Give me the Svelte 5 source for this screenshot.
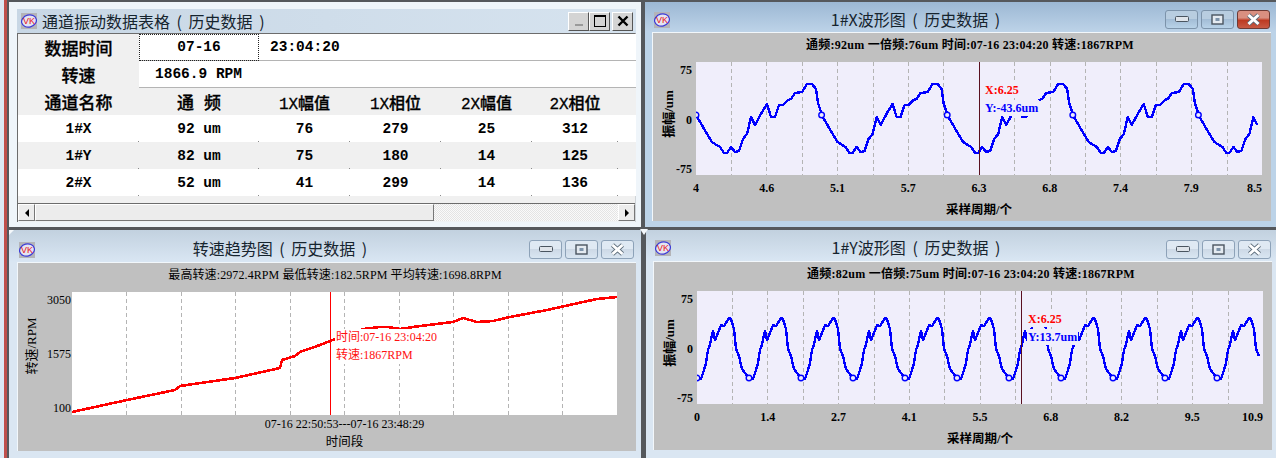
<script>
	// one period of each waveform, as [x, y] in plot pixels from the period start
	const xPeriod = [
		[0, 53], [7, 65], [16, 80], [19, 82], [24, 85], [28, 91], [31, 91], [35, 85], [39, 90], [43, 89],
		[47, 77], [51, 72], [55, 55], [59, 63], [66, 50], [71, 42], [75, 55], [79, 55], [83, 43], [87, 43],
		[92, 38], [95, 37], [99, 31], [106, 30], [111, 22], [116, 22], [120, 27], [122, 41], [126, 53]
	];
	const yPeriod = [
		[0, 87], [4, 88], [7, 79], [9, 72], [11, 59], [13, 54], [14, 48], [16, 40], [18, 49], [21, 42],
		[24, 34], [27, 35], [32, 27], [34, 28], [37, 38], [39, 58], [42, 65], [45, 78], [48, 82], [51, 86], [52, 87]
	];

	function buildWave(period, step, width) {
		const pts = [];
		const marks = [];
		for (let i = 0; i * step < width; i++) {
			marks.push([i * step, period[0][1]]);
			for (const [x, y] of period) {
				const px = x + i * step;
				if (px <= width) pts.push(px + ',' + y);
			}
		}
		return { line: pts.join(' '), marks };
	}

	const gridX = Array.from({ length: 15 }, (_, i) => (i + 1) * 35.4);
	const gridTrend = Array.from({ length: 9 }, (_, i) => (i + 1) * 54.5);

	const waves = [
		{
			cls: 'win-x',
			active: true,
			title: '1#X波形图 ( 历史数据 )',
			info: '通频:92um 一倍频:76um 时间:07-16 23:04:20 转速:1867RPM',
			ticks: ['4', '4.6', '5.1', '5.7', '6.3', '6.8', '7.4', '7.9', '8.5'],
			wave: buildWave(xPeriod, 125.6, 562),
			cursor: 283,
			tagLeft: 288,
			tagX: 'X:6.25',
			tagY: 'Y:-43.6um'
		},
		{
			cls: 'win-y',
			active: false,
			title: '1#Y波形图 ( 历史数据 )',
			info: '通频:82um 一倍频:75um 时间:07-16 23:04:20 转速:1867RPM',
			ticks: ['0', '1.4', '2.7', '4.1', '5.5', '6.8', '8.2', '9.5', '10.9'],
			wave: buildWave(yPeriod, 52, 564),
			cursor: 324,
			tagLeft: 330,
			tagX: 'X:6.25',
			tagY: 'Y:13.7um'
		}
	];

	const trendPoints =
		'0,120 55,108 103,98 108,94 163,86 208,76 210,68 223,64 228,60 248,53 258,49 291,37 308,35 316,35 328,37 341,35 365,32 381,30 391,26 405,30 421,29 438,25 475,18 511,10 525,7 545,5';

	const rows = [
		['1#X', '92 um', '76', '279', '25', '312'],
		['1#Y', '82 um', '75', '180', '14', '125'],
		['2#X', '52 um', '41', '299', '14', '136']
	];
</script>

{#snippet logo()}
	<svg class="logo" width="16" height="16" viewBox="0 0 16 16">
		<rect width="16" height="16" fill="#b4b4b8" />
		<ellipse cx="8" cy="8" rx="7.5" ry="6" fill="#e4e4f0" stroke="#3a3ad8" stroke-width="1.2" transform="rotate(-15 8 8)" />
		<text x="8" y="11" text-anchor="middle" font-size="9" fill="#e8141c" font-family="Liberation Sans, sans-serif">VK</text>
	</svg>
{/snippet}

{#snippet aeroButtons(hot)}
	<div class="aero-btns">
		<span class="aero" class:dim={!hot}>
			<svg width="14" height="7" viewBox="0 0 14 7"><rect x="0.5" y="0.5" width="13" height="5" rx="1" fill="#dfe4ea" stroke="#4a5560" /></svg>
		</span>
		<span class="aero" class:dim={!hot}>
			<svg width="13" height="11" viewBox="0 0 13 11"><rect x="1" y="1" width="11" height="9" fill="#e4eaf0" stroke="#4a5560" stroke-width="1.4" /><rect x="4.5" y="4" width="4" height="3" fill="#7d93aa" /></svg>
		</span>
		<span class="aero close" class:dim={!hot}>
			<svg width="15" height="13" viewBox="0 0 15 13">
				<path d="M2.5 2 L12.5 11 M12.5 2 L2.5 11" stroke="#5a6a78" stroke-width="4.4" />
				<path d="M2.5 2 L12.5 11 M12.5 2 L2.5 11" stroke="#fff" stroke-width="3" />
			</svg>
		</span>
	</div>
{/snippet}

<div class="desktop">
	<section class="win win-table">
		<header class="table-title">
			{@render logo()}
			<span class="table-caption">通道振动数据表格 ( 历史数据 )</span>
			<div class="classic-btns">
				<span class="classic"><i class="min-glyph"></i></span>
				<span class="classic"><i class="max-glyph"></i></span>
				<span class="classic gap">
					<svg width="12" height="12" viewBox="0 0 12 12"><path d="M1.5 1.5 L10.5 10.5 M10.5 1.5 L1.5 10.5" stroke="#000" stroke-width="2.4" /></svg>
				</span>
			</div>
		</header>
		<div class="grid-frame">
			<table>
				<colgroup>
					<col class="c-name" /><col class="c-total" /><col class="c-num" />
					<col class="c-num" /><col class="c-num" /><col class="c-last" /><col />
				</colgroup>
				<tbody>
					<tr class="line-row">
						<th>数据时间</th>
						<td class="focus">07-16</td>
						<td colspan="5" class="left time-cell">23:04:20</td>
					</tr>
					<tr class="line-row">
						<th>转速</th>
						<td colspan="6" class="left rpm-cell">1866.9 RPM</td>
					</tr>
					<tr class="head-row">
						<th>通道名称</th><th>通 频</th><th class="mixed">1X幅值</th><th class="mixed">1X相位</th><th class="mixed">2X幅值</th><th class="mixed">2X相位</th><th></th>
					</tr>
					{#each rows as row, i}
						<tr class="data-row" class:shade={i === 1}>
							{#each row as cell}
								<td>{cell}</td>
							{/each}
							<td></td>
						</tr>
					{/each}
				</tbody>
			</table>
			<div class="grid-rest"></div>
			<div class="scrollbar">
				<span class="scroll-btn"><i class="arrow-left"></i></span>
				<span class="thumb"></span>
				<span class="track"></span>
				<span class="scroll-btn"><i class="arrow-right"></i></span>
			</div>
		</div>
	</section>

	{#each waves as w}
		<section class="win chart-win {w.cls}" class:active={w.active}>
			<header class="chart-title">
				{@render logo()}
				<span class="chart-caption">{w.title}</span>
				{@render aeroButtons(w.active)}
			</header>
			<div class="client wave-client">
				<div class="info">{w.info}</div>
				<div class="y-axis">
					<span class="y-title">振幅/um</span>
					<div class="y-ticks"><span>75</span><span>0</span><span>-75</span></div>
				</div>
				<div class="plot wave-plot">
					<svg width="566" height="113" viewBox="0 0 566 113">
						{#each gridX as x}
							<line x1={x} x2={x} y1="0" y2="113" class="grid-line" />
						{/each}
						<polyline points={w.wave.line} class="wave-line" />
						{#each w.wave.marks as m}
							<circle cx={m[0]} cy={m[1]} r="2.8" class="wave-mark" />
						{/each}
						<line x1={w.cursor} x2={w.cursor} y1="0" y2="113" class="cursor-dark" />
					</svg>
					<span class="tag tag-x" style="left:{w.tagLeft}px">{w.tagX}</span>
					<span class="tag tag-y" style="left:{w.tagLeft}px">{w.tagY}</span>
				</div>
				<div class="x-ticks">
					{#each w.ticks as t}
						<span><b>{t}</b></span>
					{/each}
				</div>
				<div class="x-title">采样周期/个</div>
			</div>
		</section>
	{/each}

	<section class="win chart-win win-trend">
		<header class="chart-title">
			{@render logo()}
			<span class="chart-caption">转速趋势图 ( 历史数据 )</span>
			{@render aeroButtons(false)}
		</header>
		<div class="client trend-client">
			<div class="info">最高转速:2972.4RPM 最低转速:182.5RPM 平均转速:1698.8RPM</div>
			<div class="y-axis">
				<span class="y-title">转速/RPM</span>
				<div class="y-ticks"><span>3050</span><span>1575</span><span>100</span></div>
			</div>
			<div class="plot trend-plot">
				<svg width="545" height="123" viewBox="0 0 545 123">
					{#each gridTrend as x}
						<line x1={x} x2={x} y1="0" y2="123" class="grid-line" />
					{/each}
					<polyline points={trendPoints} class="trend-line" />
					<line x1="258" x2="258" y1="0" y2="123" class="cursor-red" />
				</svg>
				<span class="trend-tag tag-time">时间:07-16 23:04:20</span>
				<span class="trend-tag tag-rpm">转速:1867RPM</span>
			</div>
			<div class="range">07-16 22:50:53---07-16 23:48:29</div>
			<div class="x-title">时间段</div>
		</div>
	</section>

	<svg class="notch notch-a" width="8" height="6" viewBox="0 0 8 6"><path d="M0 0 H8 L4 6 Z" fill="#f4f8fb" /></svg>
	<svg class="notch notch-b" width="5" height="5" viewBox="0 0 5 5"><path d="M0 0 H5 L0 5 Z" fill="#f4f8fb" /></svg>
</div>

<style>
	:global(body) {
		margin: 0;
		background: #555;
	}
	.desktop {
		position: relative;
		width: 1276px;
		height: 458px;
		overflow: hidden;
		background: linear-gradient(to right, #dce9f5 4px, #bf504c 4px 7px, #55585c 7px);
		font-family: 'Liberation Serif', 'Noto Sans CJK SC', serif;
		color: #000;
	}
	.win {
		position: absolute;
		box-sizing: border-box;
		display: flex;
		flex-direction: column;
	}
	.logo {
		flex: none;
	}

	/* table window */
	.win-table {
		left: 9px;
		top: 2px;
		width: 632px;
		height: 225px;
		padding: 7px 5px 0 8px;
		background: #eff5fa;
	}
	.table-title {
		display: flex;
		align-items: center;
		height: 24px;
		padding-left: 4px;
		box-sizing: border-box;
		background: linear-gradient(to right, #c8d7e5, #d6e3ef);
	}
	.table-caption {
		margin-left: 5px;
		font-family: 'Noto Sans CJK SC', sans-serif;
		font-size: 16px;
		word-spacing: 3px;
		color: #16242e;
	}
	.classic-btns {
		display: flex;
		margin-left: auto;
		margin-right: 3px;
	}
	.classic {
		box-sizing: border-box;
		display: flex;
		align-items: center;
		justify-content: center;
		width: 21px;
		height: 19px;
		background: #d4d4d4;
		border: 1px solid;
		border-color: #fff #555 #555 #fff;
	}
	.classic.gap {
		margin-left: 2px;
	}
	.min-glyph {
		width: 8px;
		height: 2px;
		margin-top: 8px;
		background: #9a9a9a;
	}
	.max-glyph {
		box-sizing: border-box;
		width: 12px;
		height: 12px;
		border: 1px solid #000;
		border-top-width: 2px;
	}
	.grid-frame {
		display: flex;
		flex-direction: column;
		width: 619px;
		height: 189px;
		box-sizing: border-box;
		border: 1px solid #6c6c6c;
		border-right-color: #cfd4d8;
		border-bottom: 0;
		background: #f0f0f0;
	}
	table {
		width: 618px;
		table-layout: fixed;
		border-collapse: collapse;
		font-family: 'Liberation Mono', 'Noto Sans CJK SC', monospace;
		font-size: 14.5px;
		font-weight: 700;
	}
	.c-name {
		width: 121px;
	}
	.c-total {
		width: 120px;
	}
	.c-num {
		width: 91px;
	}
	.c-last {
		width: 86px;
	}
	th,
	td {
		height: 27px;
		padding: 0;
		text-align: center;
		background: #fff;
		position: relative;
	}
	th {
		background: #f0f0f0;
		font-size: 17px;
		font-weight: 500;
		-webkit-text-stroke: 0.3px #000;
	}
	th.mixed {
		font-size: 16px;
	}
	tr.line-row td,
	tr.line-row th {
		border-bottom: 1px solid #b4b4b4;
		height: 26px;
	}
	tr.line-row th {
		border-bottom-color: #f0f0f0;
	}
	tr.data-row td {
		padding-top: 1px;
		height: 26px;
	}
	tr.data-row td:not(:last-child)::after {
		content: '';
		position: absolute;
		right: 0;
		bottom: 0;
		width: 1px;
		height: 1px;
		background: #8a8a8a;
	}
	tr.shade td {
		background: #f0f0f0;
	}
	td.left {
		text-align: left;
	}
	td.time-cell {
		padding-left: 11px;
	}
	td.rpm-cell {
		padding-left: 16px;
	}
	td.focus {
		outline: 1px dotted #222;
		outline-offset: -1px;
	}
	.grid-rest {
		flex: 1;
	}
	.scrollbar {
		display: flex;
		height: 18px;
		border-top: 1px solid #6c6c6c;
		box-sizing: content-box;
		background: #eff2f4;
	}
	.scroll-btn {
		box-sizing: border-box;
		display: flex;
		align-items: center;
		justify-content: center;
		width: 17px;
		height: 17px;
		background: #ececec;
		border: 1px solid;
		border-color: #fff #777 #777 #fff;
	}
	.arrow-left,
	.arrow-right {
		width: 0;
		height: 0;
		border: 4px solid transparent;
	}
	.arrow-left {
		border-right-color: #000;
		border-left-width: 0;
	}
	.arrow-right {
		border-left-color: #000;
		border-right-width: 0;
	}
	.thumb {
		box-sizing: border-box;
		width: 399px;
		height: 17px;
		background: #ececec;
		border: 1px solid;
		border-color: #fff #777 #777 #fff;
	}
	.track {
		flex: 1;
		height: 17px;
		background: repeating-conic-gradient(#fafafa 0 25%, #e4e4e4 0 50%) 0 0 / 2px 2px;
	}

	/* chart windows */
	.chart-win {
		background: #dae6f2;
	}
	.chart-win.active {
		background: #bcd3e8;
	}
	.chart-title {
		position: relative;
		display: flex;
		align-items: center;
		justify-content: center;
		padding-right: 90px;
		padding-top: 3px;
		background: linear-gradient(#c2d1df, #d9e6f3);
		box-sizing: border-box;
	}
	.active .chart-title {
		background: linear-gradient(#9cb8d4, #bdd3e8);
	}
	.chart-title .logo {
		position: absolute;
		left: 4px;
		top: 12px;
	}
	.chart-caption {
		font-family: 'Noto Sans CJK SC', sans-serif;
		font-size: 16px;
		word-spacing: 3px;
		color: #16242e;
	}
	.aero-btns {
		position: absolute;
		top: 10px;
		right: 2px;
		display: flex;
		gap: 3px;
	}
	.aero {
		box-sizing: border-box;
		display: flex;
		align-items: center;
		justify-content: center;
		width: 33px;
		height: 19px;
		border: 1px solid #7c93aa;
		border-radius: 3px;
		background: linear-gradient(#b8cde0 45%, #a3bdd6 50%, #b8d2e8);
	}
	.aero.dim {
		background: linear-gradient(#dfe9f3 45%, #cdd9e6 50%, #d9e6f2);
		border-color: #8da2b8;
	}
	.aero.close {
		background: linear-gradient(#d98f80 40%, #bd3a22 55%, #c85a44);
		border-color: #6e3a34;
	}
	.aero.close.dim {
		background: linear-gradient(#dfe9f3 45%, #cdd9e6 50%, #d9e6f2);
		border-color: #8da2b8;
	}
	.win-x {
		left: 645px;
		top: 2px;
		width: 631px;
		height: 225px;
	}
	.win-x .chart-title {
		height: 30px;
	}
	.win-x .chart-title .logo,
	.win-y .chart-title .logo {
		left: 9px;
		top: 10px;
	}
	.win-x .aero-btns {
		top: 8px;
		right: 6px;
	}
	.win-x .client {
		margin: 0 5px 0 7px;
	}
	.win-y {
		left: 646px;
		top: 230px;
		width: 630px;
		height: 228px;
	}
	.win-y .chart-title {
		height: 31px;
	}
	.win-y .aero-btns {
		right: 5px;
	}
	.win-y .client {
		margin: 0 4px 0 7px;
	}
	.win-trend {
		left: 9px;
		top: 230px;
		width: 632px;
		height: 228px;
	}
	.win-trend .chart-title {
		height: 32px;
	}
	.win-trend .chart-title .logo {
		left: 10px;
		top: 12px;
	}
	.win-trend .aero-btns {
		right: 7px;
	}
	.win-trend .client {
		margin: 0 5px 0 8px;
	}
	.client {
		display: grid;
		height: 189px;
		background: #c0c0c0;
		border-top: 1px solid #f2f7fb;
		border-left: 1px solid #f2f7fb;
		box-sizing: border-box;
		font-size: 12px;
	}
	.wave-client {
		grid-template-columns: 43px 566px 1fr;
		grid-template-rows: 29px 113px 26px 1fr;
		font-weight: 700;
	}
	.trend-client {
		grid-template-columns: 54px 545px 1fr;
		grid-template-rows: 29px 123px 18px 1fr;
	}
	.info {
		grid-column: 1 / -1;
		padding-left: 16px;
		text-align: center;
		line-height: 24px;
		letter-spacing: 0.1px;
	}
	.wave-client .info {
		letter-spacing: 0.25px;
	}
	.y-axis {
		position: relative;
		display: flex;
		justify-content: flex-end;
	}
	.y-title {
		position: absolute;
		left: 14px;
		top: calc(50% - 5px);
		white-space: nowrap;
		transform: translate(-50%, -50%) rotate(-90deg);
		font-size: 13px;
	}
	.trend-client .y-title {
		left: 12px;
		top: calc(50% - 8px);
	}
	.y-ticks {
		display: flex;
		flex-direction: column;
		justify-content: space-between;
		align-items: flex-end;
		height: 115px;
		padding-right: 4px;
		line-height: 16px;
	}
	.trend-client .y-ticks {
		height: 124px;
		padding-right: 1px;
	}
	.plot {
		position: relative;
		line-height: 0;
	}
	.wave-plot {
		background: #f0eefb;
	}
	.trend-plot {
		background: #fff;
	}
	.grid-line {
		stroke: #b4b4b4;
		stroke-width: 1;
		stroke-dasharray: 4 3;
		shape-rendering: crispEdges;
	}
	.wave-line {
		fill: none;
		stroke: #0000ff;
		stroke-width: 2.4;
		stroke-linejoin: round;
		shape-rendering: crispEdges;
	}
	.wave-mark {
		fill: #f0eefb;
		stroke: #0000ff;
		stroke-width: 1.4;
	}
	.trend-line {
		fill: none;
		stroke: #ff0000;
		stroke-width: 2.6;
		stroke-linejoin: round;
		shape-rendering: crispEdges;
	}
	.cursor-dark {
		stroke: #5a1020;
		stroke-width: 1;
		shape-rendering: crispEdges;
	}
	.cursor-red {
		stroke: #ff0000;
		stroke-width: 1;
		shape-rendering: crispEdges;
	}
	.tag {
		position: absolute;
		padding: 0 1px;
		background: #f0eefb;
		line-height: 16px;
		white-space: nowrap;
	}
	.tag-x {
		top: 20px;
		color: #ff0000;
	}
	.tag-y {
		top: 38px;
		color: #0000ff;
	}
	.trend-tag {
		position: absolute;
		left: 263px;
		padding: 0 1px;
		background: #fff;
		color: #ff1010;
		line-height: 17px;
		white-space: nowrap;
	}
	.tag-time {
		top: 37px;
	}
	.tag-rpm {
		top: 55px;
	}
	.x-ticks {
		grid-column: 2;
		display: flex;
		justify-content: space-between;
		line-height: 26px;
	}
	.x-ticks span {
		display: flex;
		justify-content: center;
		width: 0;
		white-space: nowrap;
	}
	.x-ticks span:last-child {
		justify-content: flex-end;
	}
	.x-ticks b {
		display: block;
	}
	.range {
		grid-column: 2;
		text-align: center;
		line-height: 18px;
	}
	.x-title {
		grid-column: 2;
		text-align: center;
		line-height: 18px;
		font-size: 12.5px;
	}
	.notch {
		position: absolute;
	}
	.notch-a {
		left: 640px;
		top: 229px;
	}
	.notch-b {
		left: 9px;
		top: 230px;
	}
</style>
